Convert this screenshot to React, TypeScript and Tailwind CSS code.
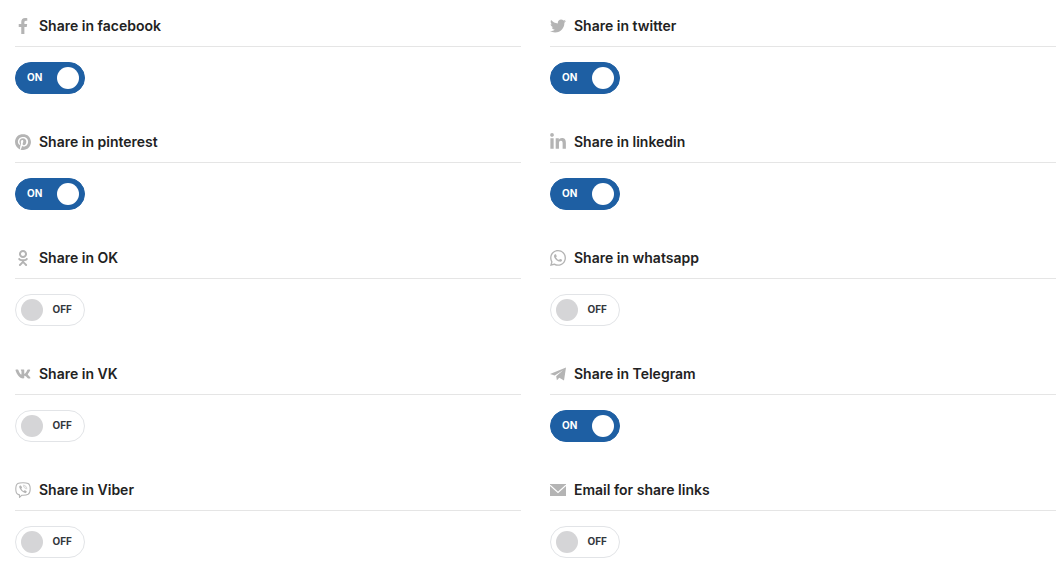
import { useState, type ComponentType } from 'react';
import { FaFacebookF, FaTwitter, FaLinkedinIn, FaOdnoklassniki, FaVk } from 'react-icons/fa';
import { SiPinterest, SiWhatsapp } from 'react-icons/si';

type IconProps = { className?: string };
type Item = { id: string; label: string; on: boolean; Icon: ComponentType<IconProps>; icon: string };

function TelegramIcon({ className }: IconProps) {
  return (
    <svg viewBox="0 0 16 16" fill="currentColor" className={className} aria-hidden="true">
      <path d="M16 1.400 14 14.500 9.300 11.700 6.900 14.300 6.200 10.200 13 4.200 4.700 9.400 0 8.100Z" />
    </svg>
  );
}

function ViberIcon({ className }: IconProps) {
  return (
    <svg viewBox="0 0 16 16" fill="none" stroke="currentColor" strokeLinecap="round" strokeLinejoin="round" className={className} aria-hidden="true">
      <path strokeWidth="1.1" d="M8 .7c-2.200 0-4 .2-5.300.9C1.200 2.500.8 4.200.8 7s.6 4.500 2.100 5.300c.500.300 1.100.500 1.600.600v2.500l2.400-2.200H8c2.200 0 3.800-.2 5.100-.9 1.500-.9 2.100-2.500 2.100-5.300s-.5-4.500-2.100-5.400C11.900.9 10.200.7 8 .7Z" />
      <path fill="currentColor" stroke="none" d="M5.200 3.600c.3-.2.600-.1.800.2l.9 1.300c.2.300.1.600-.1.800l-.5.500c.4 1.200 1.200 2.100 2.500 2.600l.5-.6c.2-.3.500-.3.800-.1l1.400 1c.3.200.4.500.2.800-.4.700-1 1.200-1.700 1-2.900-1.100-4.900-3.200-5.800-5.800-.2-.7.300-1.300 1-1.700Z" />
      <path strokeWidth=".6" d="M8.300 3.200c2.300.1 3.500 1.500 3.500 3.700M8.500 4.600c1.300.1 1.900.9 1.900 2.100" />
    </svg>
  );
}

function MailIcon({ className }: IconProps) {
  return (
    <svg viewBox="0 0 16 16" className={className} aria-hidden="true">
      <path fill="currentColor" d="M0 2h16v12H0z" />
      <path fill="none" stroke="white" strokeWidth="1.200" d="m0 3.200 8 7.300 8-7.300" />
    </svg>
  );
}

const items: Item[] = [
  { id: 'facebook', label: 'Share in facebook', on: true, Icon: FaFacebookF, icon: 'size-4' },
  { id: 'twitter', label: 'Share in twitter', on: true, Icon: FaTwitter, icon: 'size-4' },
  { id: 'pinterest', label: 'Share in pinterest', on: true, Icon: SiPinterest, icon: 'size-4' },
  { id: 'linkedin', label: 'Share in linkedin', on: true, Icon: FaLinkedinIn, icon: 'size-[18px]' },
  { id: 'ok', label: 'Share in OK', on: false, Icon: FaOdnoklassniki, icon: 'size-4' },
  { id: 'whatsapp', label: 'Share in whatsapp', on: false, Icon: SiWhatsapp, icon: 'size-4' },
  { id: 'vk', label: 'Share in VK', on: false, Icon: FaVk, icon: 'size-4' },
  { id: 'telegram', label: 'Share in Telegram', on: true, Icon: TelegramIcon, icon: 'size-4' },
  { id: 'viber', label: 'Share in Viber', on: false, Icon: ViberIcon, icon: 'size-4' },
  { id: 'email', label: 'Email for share links', on: false, Icon: MailIcon, icon: 'size-4' },
];

function ShareOption({ id, label, on, Icon, icon }: Item) {
  const [checked, setChecked] = useState(on);
  return (
    <div className="pb-9">
      <div className="flex h-[33px] items-start gap-2 border-b border-[#e5e5e5]">
        <span className="mt-1 flex size-4 items-center justify-center text-[#b4b4b4]">
          <Icon className={`shrink-0 ${icon}`} />
        </span>
        <label htmlFor={id} className="text-sm leading-6 font-semibold text-[#222222]">{label}</label>
      </div>
      <button
        id={id}
        type="button"
        role="switch"
        aria-checked={checked}
        onClick={() => setChecked(!checked)}
        className={
          checked
            ? 'mt-[15px] flex h-8 w-[70px] items-center justify-between rounded-full border border-[#1e5fa3] bg-[#1e5fa3] pr-[5px] pl-[11px] text-[10px] font-bold text-white'
            : 'mt-[15px] flex h-8 w-[70px] flex-row-reverse items-center justify-between rounded-full border border-[#e2e4e7] bg-white pr-[12px] pl-[5px] text-[10px] font-bold text-[#32373c]'
        }
      >
        <span className="pb-[2px] leading-3">{checked ? 'ON' : 'OFF'}</span>
        <span className={checked ? 'size-[22px] rounded-full bg-white' : 'size-[22px] rounded-full bg-[#d5d5d7]'} />
      </button>
    </div>
  );
}

export default function App() {
  return (
    <main className="bg-white pt-[14px] pr-[6px] pl-[15px] font-['Inter',sans-serif]">
      <div className="grid grid-cols-2 gap-x-[29px]">
        {items.map((item) => (
          <ShareOption key={item.id} {...item} />
        ))}
      </div>
    </main>
  );
}
